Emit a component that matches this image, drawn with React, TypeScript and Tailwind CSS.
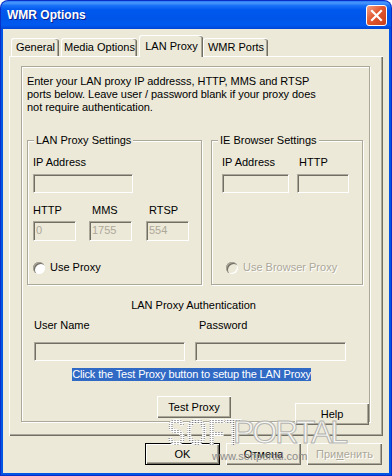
import React from 'react';

const raised =
  'shadow-[inset_1px_1px_0_#fff,inset_-1px_-1px_0_#716f64,inset_-2px_-2px_0_#aca899]';
const sunken =
  'border border-t-[#aca899] border-l-[#aca899] border-r-white border-b-white shadow-[inset_1px_1px_0_#716f64]';
const etched = 'border border-[#aca899] shadow-[1px_1px_0_#fff,inset_1px_1px_0_#fff]';

const Field: React.FC<{ className?: string; value?: string }> = ({ className = '', value }) => (
  <div className={`${sunken} bg-[#ece9d8] pl-[2px] pt-[2px] text-[#aca899] ${className}`}>{value}</div>
);

const Radio: React.FC<{ disabled?: boolean }> = ({ disabled }) => (
  <span
    className={`inline-block h-[12px] w-[12px] rounded-full shadow-[inset_1px_1px_0_#aca899,inset_2px_2px_0_#716f64,inset_-1px_-1px_0_#fff] ${
      disabled ? 'bg-[#ece9d8]' : 'bg-white'
    }`}
  />
);

const Button: React.FC<{ className?: string; children: React.ReactNode; def?: boolean }> = ({
  className = '',
  children,
  def,
}) => (
  <div
    className={`flex items-center justify-center bg-[#ece9d8] ${
      def ? 'border border-black' : ''
    } ${raised} ${className}`}
  >
    {children}
  </div>
);

const tab =
  'flex items-center justify-center rounded-t-[3px] border-t border-l border-white shadow-[inset_-1px_0_0_#716f64,inset_-2px_0_0_#aca899]';

export default function App() {
  return (
    <div className="relative h-[476px] w-[392px] overflow-hidden bg-white font-['Liberation_Sans',Arial,sans-serif] text-[11px] leading-[13px] text-black">
      <div className="flex h-full flex-col overflow-hidden rounded-t-[8px] bg-[#0a2fc8] px-px pb-px pt-px">
        {/* Title bar */}
        <div className="flex h-[28px] shrink-0 items-center justify-between rounded-t-[7px] bg-[linear-gradient(to_bottom,#2a7bf7_0%,#4a98fc_7%,#1a72f6_16%,#0058ee_32%,#0055e8_62%,#005af0_86%,#0046d4_100%)] pl-[6px] pr-[4px]">
          <span className="pt-px text-[12px] font-bold text-white [text-shadow:1px_1px_0_#0c1f8a]">
            WMR Options
          </span>
          <div className="flex h-[21px] w-[21px] items-center justify-center rounded-[3px] border border-white bg-[linear-gradient(135deg,#f2a285_0%,#e2582f_45%,#c8401b_100%)]">
            <svg width="13" height="13" viewBox="0 0 13 13">
              <path d="M2 2L11 11M11 2L2 11" stroke="#fff" strokeWidth="2.2" strokeLinecap="square" />
            </svg>
          </div>
        </div>

        {/* Body */}
        <div className="flex-1 border-x-[2px] border-b-[2px] border-[#0055e5] bg-[#ece9d8]">
          {/* Tabs */}
          <div className="mt-[6px] flex h-[21px] items-end pl-[8px]">
            <div className={`${tab} h-[18px] w-[48px]`}>General</div>
            <div className={`${tab} ml-[2px] h-[18px] w-[76px]`}>Media Options</div>
            <div className={`${tab} relative z-10 -mb-px ml-[2px] h-[22px] w-[64px] bg-[#ece9d8]`}>
              LAN Proxy
            </div>
            <div className={`${tab} h-[18px] w-[65px]`}>WMR Ports</div>
          </div>

          {/* Tab panel */}
          <div className="ml-[6px] h-[380px] w-[374px] border-l border-t border-white pl-[11px] pt-[9px] shadow-[inset_-1px_-1px_0_#716f64,inset_-2px_-2px_0_#aca899]">
            <div className={`relative h-[356px] w-[349px] ${etched}`}>
              <p className="ml-[5px] mt-[8px] whitespace-nowrap tracking-[-0.05px]">
                Enter your LAN proxy IP addresss, HTTP, MMS and RTSP
                <br />
                ports below. Leave user / password blank if your proxy does
                <br />
                not require authentication.
              </p>

              <div className="ml-[5px] mt-[26px] flex gap-[9px]">
                {/* LAN Proxy Settings */}
                <div className={`relative h-[145px] w-[175px] ${etched}`}>
                  <span className="absolute -top-[7px] left-[6px] bg-[#ece9d8] px-[2px]">LAN Proxy Settings</span>
                  <div className="pl-[5px] pt-[15px]">
                    <div>IP Address</div>
                    <Field className="mt-[5px] h-[19px] w-[100px]" />
                    <div className="mt-[11px] flex">
                      <div className="w-[43px]">
                        <div>HTTP</div>
                        <Field className="mt-[4px] h-[20px] w-[43px]" value="0" />
                      </div>
                      <div className="ml-[13px] w-[43px]">
                        <div className="pl-[3px]">MMS</div>
                        <Field className="mt-[4px] h-[20px] w-[43px]" value="1755" />
                      </div>
                      <div className="ml-[14px] w-[43px]">
                        <div className="pl-[3px]">RTSP</div>
                        <Field className="mt-[4px] h-[20px] w-[43px]" value="554" />
                      </div>
                    </div>
                    <div className="mt-[20px] flex items-center gap-[5px]">
                      <Radio />
                      <span>Use Proxy</span>
                    </div>
                  </div>
                </div>

                {/* IE Browser Settings */}
                <div className={`relative h-[145px] w-[152px] ${etched}`}>
                  <span className="absolute -top-[7px] left-[6px] bg-[#ece9d8] px-[2px]">IE Browser Settings</span>
                  <div className="pl-[10px] pt-[15px]">
                    <div className="flex">
                      <div className="w-[67px]">
                        <div>IP Address</div>
                        <Field className="mt-[5px] h-[19px] w-[67px]" />
                      </div>
                      <div className="ml-[8px] w-[52px]">
                        <div className="pl-[2px]">HTTP</div>
                        <Field className="mt-[5px] h-[19px] w-[52px]" />
                      </div>
                    </div>
                    <div className="ml-[4px] mt-[68px] flex items-center gap-[5px] text-[#aca899] [text-shadow:1px_1px_0_#fff]">
                      <Radio disabled />
                      <span>Use Browser Proxy</span>
                    </div>
                  </div>
                </div>
              </div>

              <div className="mt-[14px] w-[343px] text-center">LAN Proxy Authentication</div>

              <div className="mt-[7px] flex">
                <div className="ml-[12px] w-[151px]">
                  <div>User Name</div>
                  <Field className="mt-[10px] h-[19px] w-[151px]" />
                </div>
                <div className="ml-[10px] w-[151px]">
                  <div className="pl-[4px]">Password</div>
                  <Field className="mt-[10px] h-[19px] w-[151px]" />
                </div>
              </div>

              <div className="mt-[7px] flex w-[339px] justify-center">
                <span className="bg-[#316ac5] tracking-[-0.15px] text-white">
                  Click the Test Proxy button to setup the LAN Proxy
                </span>
              </div>

              <Button className="ml-[135px] mt-[15px] h-[22px] w-[74px]">Test Proxy</Button>

              <Button className="absolute left-[273px] top-[336px] h-[22px] w-[74px]">Help</Button>
            </div>
          </div>

          {/* Dialog buttons */}
          <div className="mt-[7px] flex justify-end gap-[6px] pr-[7px]">
            <Button def className="h-[22px] w-[75px]">
              OK
            </Button>
            <Button className="h-[22px] w-[75px]">Отмена</Button>
            <Button className="h-[22px] w-[75px] text-[#aca899] [text-shadow:1px_1px_0_#fff]">
              <span>
                При<span className="underline">м</span>енить
              </span>
            </Button>
          </div>
        </div>
      </div>

      {/* Watermark */}
      <span className="pointer-events-none absolute left-[167px] top-[414px] origin-left scale-x-[0.76] bg-[conic-gradient(#7a7a7a_0_25%,#ffffff_0_100%)] bg-[length:2px_2px] bg-clip-text text-[37px] font-bold leading-none text-transparent">
        SOFT
      </span>
      <span className="pointer-events-none absolute left-[233px] top-[416px] text-[32px] leading-none tracking-[-2px] text-[#f6f6f2] [-webkit-text-stroke:1px_#b4b4b0]">
        PORTAL
      </span>
      <span className="pointer-events-none absolute left-[212px] top-[450px] text-[11px] leading-[13px] text-[#8c8c8c]">
        www.softportal.com
      </span>
    </div>
  );
}
